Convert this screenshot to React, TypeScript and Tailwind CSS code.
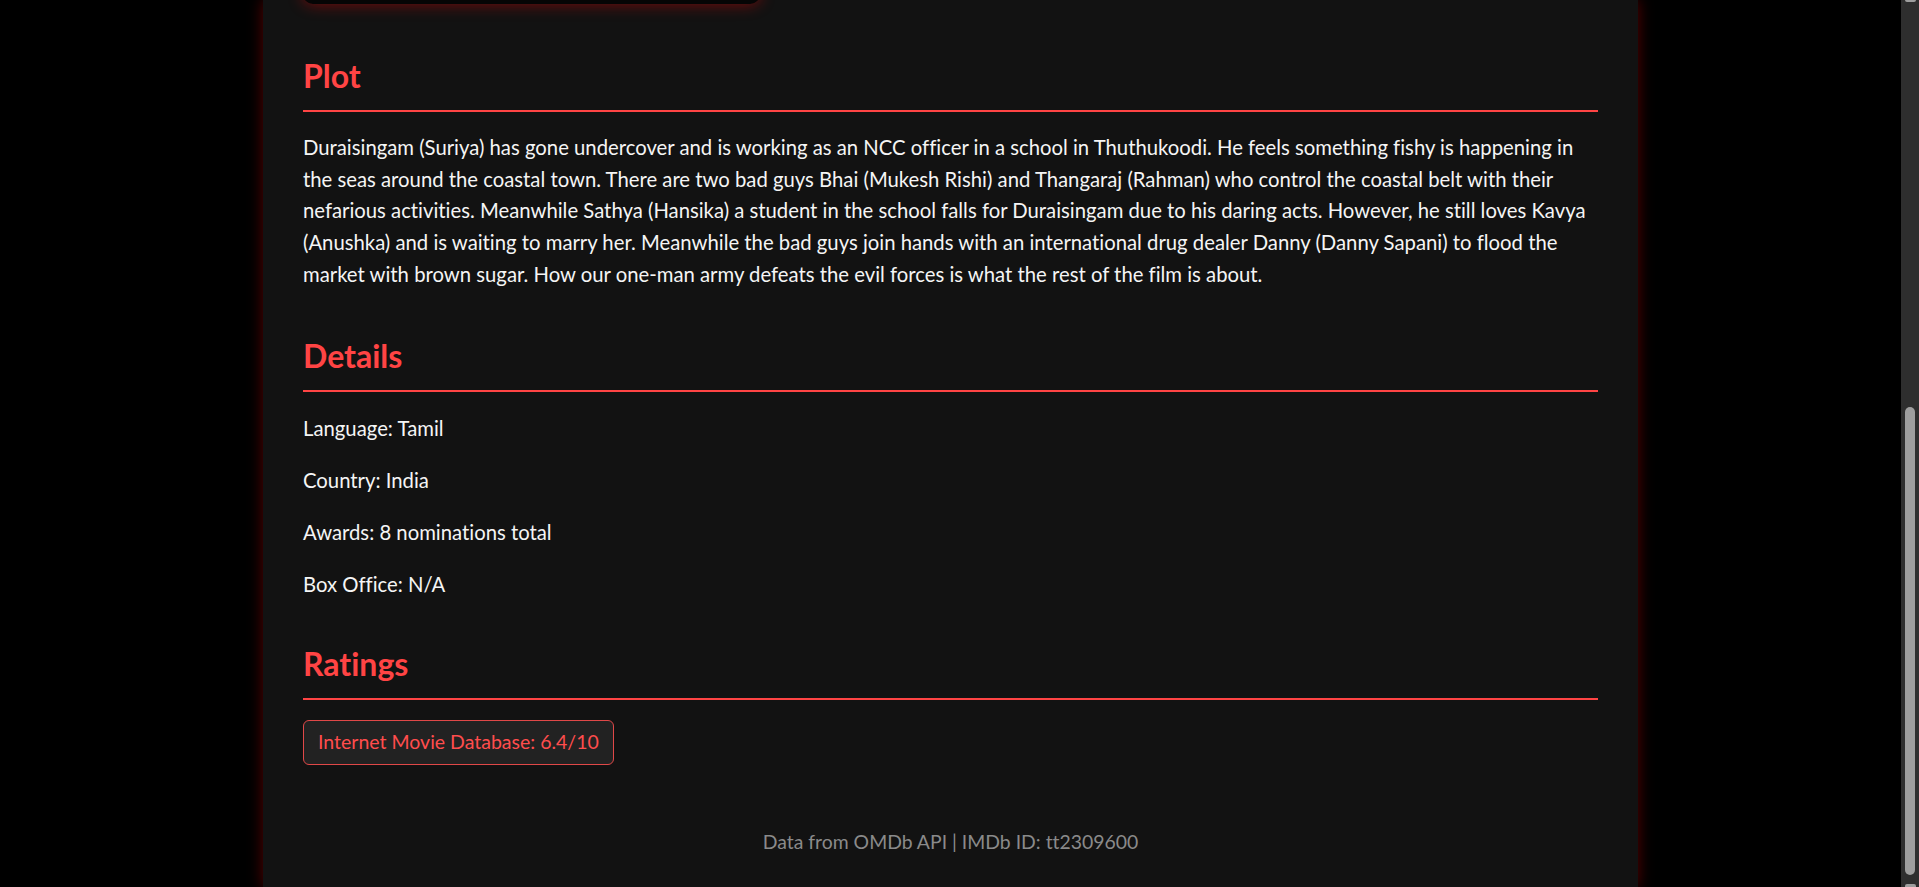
const plot =
  "Duraisingam (Suriya) has gone undercover and is working as an NCC officer in a school in Thuthukoodi. He feels something fishy is happening in the seas around the coastal town. There are two bad guys Bhai (Mukesh Rishi) and Thangaraj (Rahman) who control the coastal belt with their nefarious activities. Meanwhile Sathya (Hansika) a student in the school falls for Duraisingam due to his daring acts. However, he still loves Kavya (Anushka) and is waiting to marry her. Meanwhile the bad guys join hands with an international drug dealer Danny (Danny Sapani) to flood the market with brown sugar. How our one-man army defeats the evil forces is what the rest of the film is about.";

const details = [
  "Language: Tamil",
  "Country: India",
  "Awards: 8 nominations total",
  "Box Office: N/A",
];

export default function App() {
  return (
    <div className="flex h-screen overflow-hidden bg-black font-['Lato',sans-serif] [font-variant-ligatures:none]">

      {/* PAGE */}
      <div className="flex flex-1 justify-center">

        <div className="flex w-[1375px] flex-col bg-[#121212] px-[40px] shadow-[0_0_14px_rgba(255,0,0,0.35)]">

          {/* POSTER (bottom edge) */}
          <div className="-mt-[16px] h-[20px] w-[457px] shrink-0 rounded-[10px] bg-[#050505] shadow-[0_0_16px_rgba(255,0,0,0.45)]" />

          {/* PLOT */}
          <h2 className="mt-[52px] border-b-2 border-[#ff4444] pb-[14px] text-[32px] font-bold leading-[40px] text-[#ff4444]">
            Plot
          </h2>

          <p className="mt-[20px] text-[20.3px] leading-[31.7px] text-[#f5f5f5]">
            {plot}
          </p>

          {/* DETAILS */}
          <h2 className="mt-[45px] border-b-2 border-[#ff4444] pb-[14px] text-[32px] font-bold leading-[40px] text-[#ff4444]">
            Details
          </h2>

          <div className="mt-[20px] flex flex-col gap-[20px]">
            {details.map((d) => (
              <p key={d} className="text-[20.3px] leading-[32px] text-[#f5f5f5]">
                {d}
              </p>
            ))}
          </div>

          {/* RATINGS */}
          <h2 className="mt-[44px] border-b-2 border-[#ff4444] pb-[14px] text-[32px] font-bold leading-[40px] text-[#ff4444]">
            Ratings
          </h2>

          <div className="mt-[20px] flex">
            <span className="flex h-[45px] items-center rounded-[6px] border border-[#e04848] bg-[#222222] px-[14px] text-[19.5px] text-[#ff4d4d]">
              Internet Movie Database: 6.4/10
            </span>
          </div>

          {/* FOOTER */}
          <p className="mt-[61px] text-center text-[19.4px] leading-[32px] text-[#8a8a8a]">
            Data from OMDb API | IMDb ID: tt2309600
          </p>

        </div>

      </div>

      {/* SCROLLBAR */}
      <div className="flex w-[18px] shrink-0 flex-col items-center bg-[#2e2e2e]">
        <div className="h-[2px] w-[11px] rounded-b-[2px] bg-[#9e9e9e]" />
        <div className="mt-[405px] h-[468px] w-[10px] rounded-full bg-[#9e9e9e]" />
        <div className="mt-auto h-[3px] w-[11px] rounded-t-[2px] bg-[#9e9e9e]" />
      </div>

    </div>
  );
}
